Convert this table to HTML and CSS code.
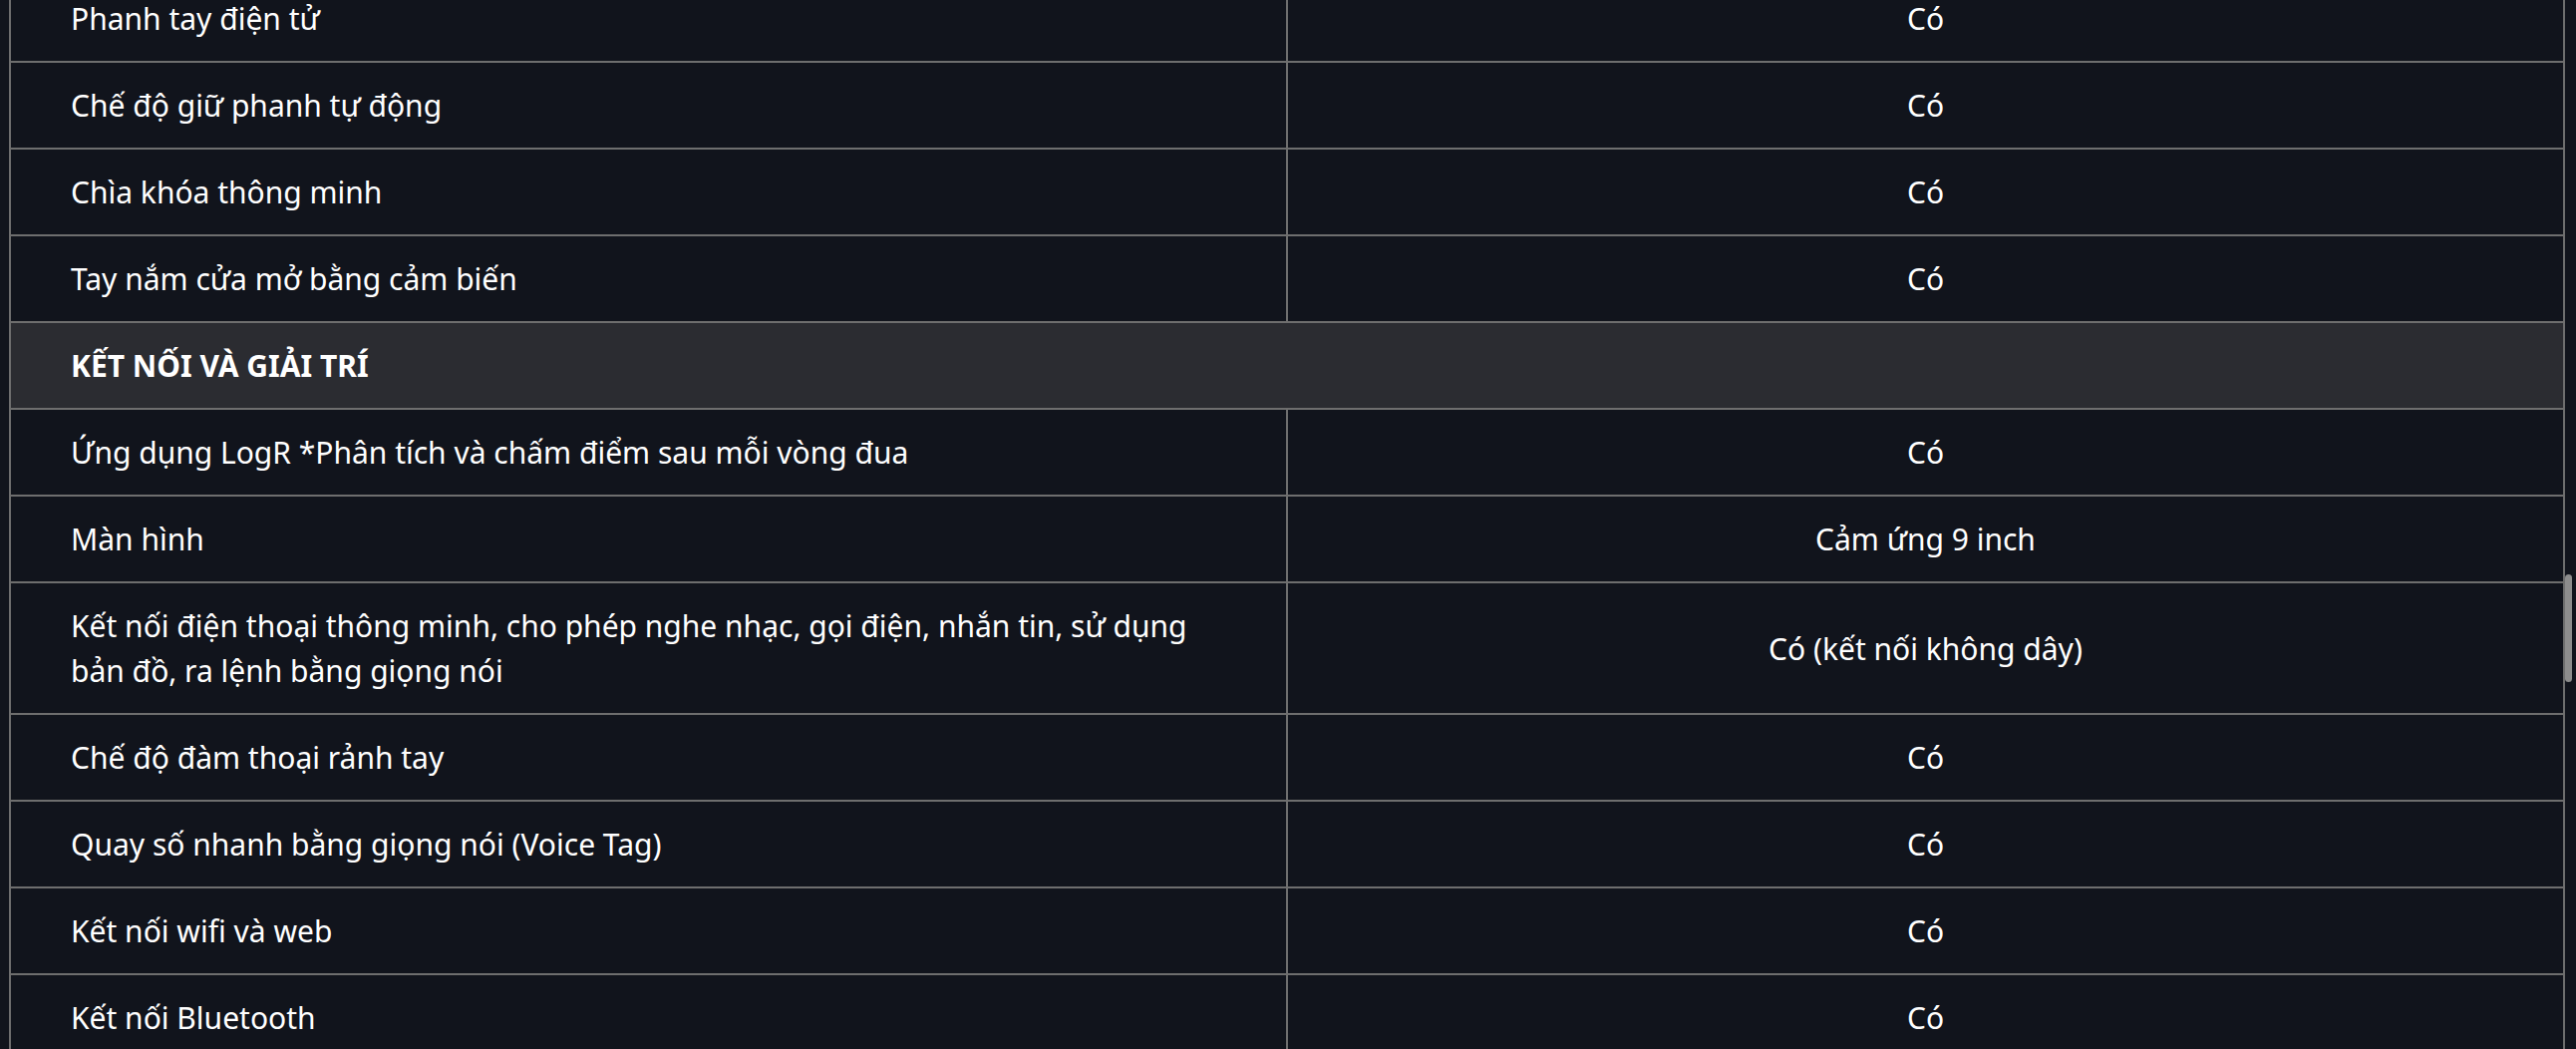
FILE: index.html
```html
<!DOCTYPE html>
<html lang="vi">
<head>
<meta charset="utf-8">
<title>Thông số kỹ thuật</title>
<link rel="stylesheet" href="styles.css">
</head>
<body>
<div class="page">
  <div class="content">
    <table class="specs">
      <colgroup><col class="c1"><col class="c2"></colgroup>
      <tbody>
        <tr><td>Phanh tay điện tử</td><td class="val">Có</td></tr>
        <tr><td>Chế độ giữ phanh tự động</td><td class="val">Có</td></tr>
        <tr><td>Chìa khóa thông minh</td><td class="val">Có</td></tr>
        <tr><td>Tay nắm cửa mở bằng cảm biến</td><td class="val">Có</td></tr>
        <tr class="section"><td colspan="2">KẾT NỐI VÀ GIẢI TRÍ</td></tr>
        <tr><td>Ứng dụng LogR *Phân tích và chấm điểm sau mỗi vòng đua</td><td class="val">Có</td></tr>
        <tr><td>Màn hình</td><td class="val">Cảm ứng 9 inch</td></tr>
        <tr><td>Kết nối điện thoại thông minh, cho phép nghe nhạc, gọi điện, nhắn tin, sử dụng bản đồ, ra lệnh bằng giọng nói</td><td class="val">Có (kết nối không dây)</td></tr>
        <tr><td>Chế độ đàm thoại rảnh tay</td><td class="val">Có</td></tr>
        <tr><td>Quay số nhanh bằng giọng nói (Voice Tag)</td><td class="val">Có</td></tr>
        <tr><td>Kết nối wifi và web</td><td class="val">Có</td></tr>
        <tr><td>Kết nối Bluetooth</td><td class="val">Có</td></tr>
        <tr><td>Cổng sạc USB</td><td class="val">Có</td></tr>
      </tbody>
    </table>
  </div>
  <div class="scrolltrack"><div class="thumb"></div></div>
</div>
</body>
</html>
```

FILE: styles.css
```css
html, body {
  margin: 0;
  padding: 0;
  background: #11141c;
  height: 100%;
  overflow: hidden;
}

.page {
  display: flex;
  height: 1052px;
  overflow: hidden;
}

.content {
  width: 2564px;
  margin-left: 9px;
  flex: none;
}

.specs {
  width: 2564px;
  margin-top: -26px;
  table-layout: fixed;
  border-collapse: separate;
  border-spacing: 0;
  border-left: 2px solid #6e6e6e;
  border-top: 2px solid #6e6e6e;
  font-family: "Noto Sans", "Open Sans", sans-serif;
  font-size: 30px;
  line-height: 45px;
  color: #ffffff;
}

.specs col.c1, .specs col.c2 {
  width: 50%;
}

.specs td {
  padding: 20px 60px;
  border-right: 2px solid #6e6e6e;
  border-bottom: 2px solid #6e6e6e;
  vertical-align: middle;
  text-align: left;
}

.specs td.val {
  text-align: center;
}

.specs tr.section td {
  background: #2b2c31;
  font-weight: 700;
}

.scrolltrack {
  width: 11px;
  flex: none;
}

.thumb {
  width: 7px;
  height: 108px;
  margin-top: 576px;
  background: #8d8d8d;
  border-radius: 4px;
}
```
